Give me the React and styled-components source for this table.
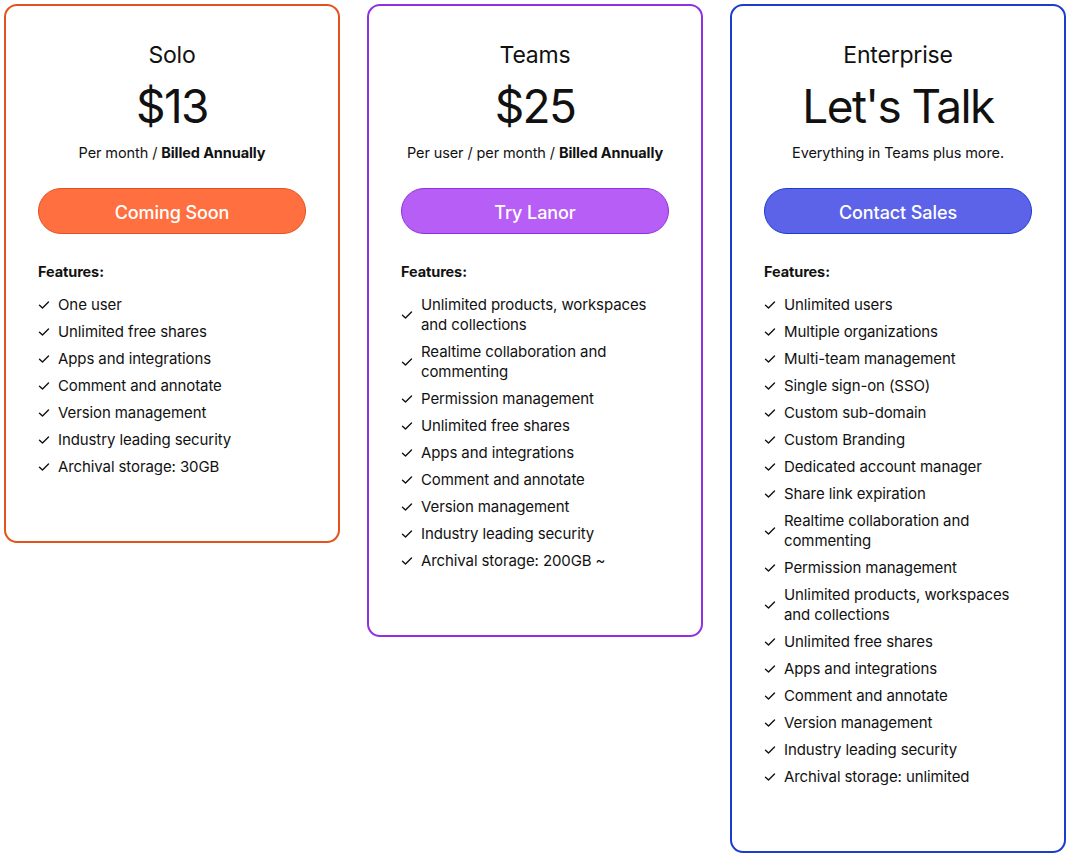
import styled, {createGlobalStyle} from "styled-components";

const GlobalStyle = createGlobalStyle`
  html, body {
    margin: 0;
    padding: 0;
    background: #ffffff;
  }
  body {
    font-family: 'Inter', 'Liberation Sans', sans-serif;
    color: #111111;
  }
`

const plans = [
    {
        name: 'Solo',
        price: '$13',
        note: <>Per month / <b>Billed Annually</b></>,
        cta: 'Coming Soon',
        border: '#e2531e',
        fill: '#ff6f3f',
        features: [
            'One user',
            'Unlimited free shares',
            'Apps and integrations',
            'Comment and annotate',
            'Version management',
            'Industry leading security',
            'Archival storage: 30GB',
        ],
    },
    {
        name: 'Teams',
        price: '$25',
        note: <>Per user / per month / <b>Billed Annually</b></>,
        cta: 'Try Lanor',
        border: '#9130e0',
        fill: '#b65ef6',
        features: [
            'Unlimited products, workspaces and collections',
            'Realtime collaboration and commenting',
            'Permission management',
            'Unlimited free shares',
            'Apps and integrations',
            'Comment and annotate',
            'Version management',
            'Industry leading security',
            'Archival storage: 200GB ~',
        ],
    },
    {
        name: 'Enterprise',
        price: "Let's Talk",
        note: 'Everything in Teams plus more.',
        cta: 'Contact Sales',
        border: '#1b3ccf',
        fill: '#5c63e8',
        features: [
            'Unlimited users',
            'Multiple organizations',
            'Multi-team management',
            'Single sign-on (SSO)',
            'Custom sub-domain',
            'Custom Branding',
            'Dedicated account manager',
            'Share link expiration',
            'Realtime collaboration and commenting',
            'Permission management',
            'Unlimited products, workspaces and collections',
            'Unlimited free shares',
            'Apps and integrations',
            'Comment and annotate',
            'Version management',
            'Industry leading security',
            'Archival storage: unlimited',
        ],
    },
]

const Check = () => (
    <svg width="12" height="12" viewBox="0 0 12 12" fill="none">
        <path d="M1.5 6.2 L4.5 9 L10.5 3" stroke="#111" strokeWidth="1.4" strokeLinecap="round" strokeLinejoin="round"/>
    </svg>
)

const PlanCard = ({plan}) => (
    <Card $border={plan.border}>
        <Head>
            <Name>{plan.name}</Name>
            <Price>{plan.price}</Price>
            <Note>{plan.note}</Note>
        </Head>
        <Cta $fill={plan.fill} $border={plan.border}>{plan.cta}</Cta>
        <FeatTitle>Features:</FeatTitle>
        <List>
            {plan.features.map((f) => (
                <Item key={f}>
                    <Tick><Check /></Tick>
                    <span>{f}</span>
                </Item>
            ))}
        </List>
    </Card>
)

export default function App() {
    return (
        <>
            <GlobalStyle />
            <Pricing>
                {plans.map((p) => <PlanCard key={p.name} plan={p} />)}
            </Pricing>
        </>
    )
}

const Pricing = styled.div`
  display: grid;
  grid-template-columns: 336px 336px 336px;
  column-gap: 27px;
  align-items: start;
  padding: 4px 0 0 4px;
`

const Card = styled.div`
  border: 2px solid ${p => p.$border};
  border-radius: 13px;
  padding: 34px 32px 64px 32px;
  background: #fff;
`

const Head = styled.div`
  display: flex;
  flex-direction: column;
  align-items: center;
  text-align: center;
`

const Name = styled.div`
  font-size: 23px;
  line-height: 30px;
  font-weight: 400;
  letter-spacing: -0.2px;
`

const Price = styled.div`
  font-size: 46px;
  line-height: 52px;
  margin-top: 10px;
  font-weight: 400;
  letter-spacing: -1.6px;
`

const Note = styled.div`
  font-size: 14.5px;
  line-height: 20px;
  margin-top: 11px;
  letter-spacing: -0.1px;
  b {
    font-weight: 700;
  }
`

const Cta = styled.div`
  margin-top: 25px;
  height: 46px;
  border: 1px solid ${p => p.$border};
  background: ${p => p.$fill};
  border-radius: 23px;
  color: #fff;
  font-size: 18px;
  font-weight: 500;
  letter-spacing: -0.1px;
  display: flex;
  align-items: center;
  justify-content: center;
  padding-top: 2px;
  box-sizing: border-box;
`

const FeatTitle = styled.div`
  margin-top: 28px;
  font-size: 14.5px;
  line-height: 20px;
  font-weight: 700;
  letter-spacing: -0.1px;
`

const List = styled.div`
  margin-top: 13px;
  display: flex;
  flex-direction: column;
  gap: 7px;
`

const Item = styled.div`
  display: flex;
  align-items: center;
  gap: 8px;
  font-size: 15px;
  line-height: 20px;
  letter-spacing: -0.1px;
  span {
    max-width: 240px;
  }
`

const Tick = styled.div`
  display: flex;
  flex-shrink: 0;
  width: 12px;
`
